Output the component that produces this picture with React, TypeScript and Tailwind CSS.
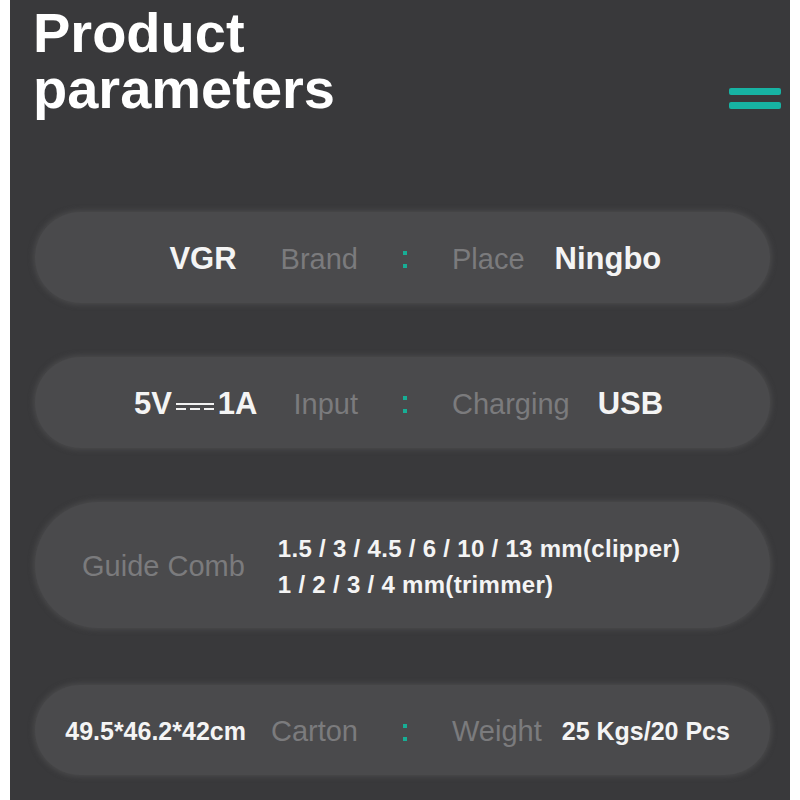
import React from 'react';

const font = { fontFamily: '"Liberation Sans", Arial, sans-serif' };

const Colon: React.FC = () => (
  <div className="flex flex-col items-center justify-center gap-[9px]">
    <span className="block w-[4px] h-[4px] bg-[#17ae95]" />
    <span className="block w-[4px] h-[4px] bg-[#17ae95]" />
  </div>
);

// DC symbol: solid bar over dashed bar
const DcSymbol: React.FC = () => (
  <span className="inline-flex flex-col justify-center gap-[3px] w-[38px] mx-[4px] translate-y-[2px]">
    <span className="block h-[2px] w-full bg-[#f2f2f2]" />
    <span className="flex justify-between">
      <span className="block h-[2px] w-[10px] bg-[#f2f2f2]" />
      <span className="block h-[2px] w-[10px] bg-[#f2f2f2]" />
      <span className="block h-[2px] w-[10px] bg-[#f2f2f2]" />
    </span>
  </span>
);

type Row = {
  value: React.ReactNode;
  label: string;
  label2: string;
  value2: string;
  gapL: string;
  gapR: string;
};

const ROWS: Row[] = [
  { value: 'VGR', label: 'Brand', label2: 'Place', value2: 'Ningbo', gapL: 'gap-[44px]', gapR: 'gap-[30px]' },
  {
    value: (
      <span className="inline-flex items-center">
        5V<DcSymbol />1A
      </span>
    ),
    label: 'Input',
    label2: 'Charging',
    value2: 'USB',
    gapL: 'gap-[36px]',
    gapR: 'gap-[28px]',
  },
];

const pill = 'ml-[25px] mr-[20px] pt-[4px] rounded-full bg-[#4a4a4c] shadow-[0_0_5px_2px_rgba(76,76,78,0.8)]';

const PairRow: React.FC<{ row: Row; h: string }> = ({ row, h }) => (
  <div className={`${pill} ${h} grid grid-cols-[323px_94px_1fr] items-center`}>
    <div className={`flex items-center justify-end ${row.gapL}`}>
      <span className="text-[31px] font-bold text-[#f4f4f4]">{row.value}</span>
      <span className="text-[29px] text-[#7b7b7d]">{row.label}</span>
    </div>
    <Colon />
    <div className={`flex items-center ${row.gapR}`}>
      <span className="text-[29px] text-[#7b7b7d]">{row.label2}</span>
      <span className="text-[31px] font-bold text-[#f4f4f4]">{row.value2}</span>
    </div>
  </div>
);

const App: React.FC = () => {
  return (
    <div className="w-[800px] h-[800px] bg-white" style={font}>
      <div className="mx-[10px] h-[800px] bg-[#39393b] overflow-hidden">
        {/* Header */}
        <div className="flex justify-between items-start pt-[5px] pl-[23px] pr-[9px]">
          <h1 className="text-[56px] leading-[56px] font-bold text-white">
            Product
            <br />
            parameters
          </h1>
          <div className="flex flex-col gap-[7px] mt-[83px]">
            <span className="block w-[52px] h-[7px] rounded-[2px] bg-[#17b3a3]" />
            <span className="block w-[52px] h-[7px] rounded-[2px] bg-[#17b3a3]" />
          </div>
        </div>

        <div className="flex flex-col mt-[95px]">
          <PairRow row={ROWS[0]} h="h-[91px]" />
          <div className="h-[54px]" />
          <PairRow row={ROWS[1]} h="h-[91px]" />
          <div className="h-[54px]" />

          {/* Guide comb */}
          <div className={`${pill} h-[126px] flex items-center pl-[47px] gap-[33px]`}>
            <span className="text-[29px] text-[#7b7b7d]">Guide Comb</span>
            <div className="flex flex-col text-[24px] leading-[36px] font-bold text-[#f4f4f4] tracking-[0.3px]">
              <span>1.5 / 3 / 4.5 / 6 / 10 / 13 mm(clipper)</span>
              <span>1 / 2 / 3 / 4 mm(trimmer)</span>
            </div>
          </div>
          <div className="h-[57px]" />

          {/* Carton */}
          <div className={`${pill} h-[90px] grid grid-cols-[323px_94px_1fr] items-center`}>
            <div className="flex items-center justify-end gap-[25px]">
              <span className="text-[25px] font-bold text-[#f4f4f4]">49.5*46.2*42cm</span>
              <span className="text-[29px] text-[#7b7b7d]">Carton</span>
            </div>
            <Colon />
            <div className="flex items-center gap-[20px]">
              <span className="text-[29px] text-[#7b7b7d]">Weight</span>
              <span className="text-[25px] font-bold text-[#f4f4f4]">25 Kgs/20 Pcs</span>
            </div>
          </div>
        </div>
      </div>
    </div>
  );
};

export default App;
